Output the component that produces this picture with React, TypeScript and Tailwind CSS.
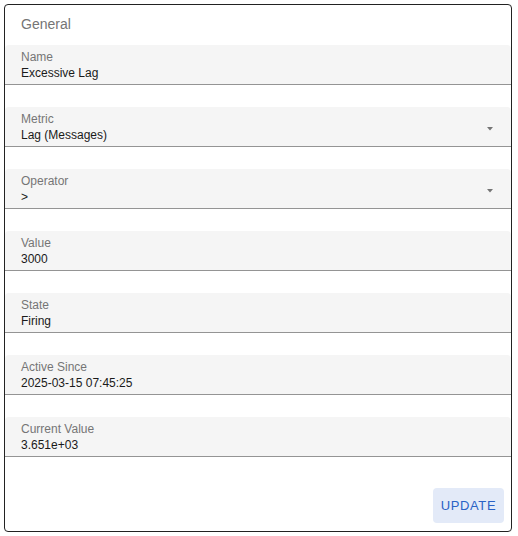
import React from "react";

interface Field {
  label: string;
  value: string;
  select?: boolean;
}

const fields: Field[] = [
  { label: "Name", value: "Excessive Lag" },
  { label: "Metric", value: "Lag (Messages)", select: true },
  { label: "Operator", value: ">", select: true },
  { label: "Value", value: "3000" },
  { label: "State", value: "Firing" },
  { label: "Active Since", value: "2025-03-15 07:45:25" },
  { label: "Current Value", value: "3.651e+03" },
];

function FilledField({ label, value, select }: Field) {
  return (
    <div className="relative h-10 bg-[#f5f5f5] rounded-t border-b border-[#949494] px-4 pt-1 mb-[22px]">
      <div className="text-[12px] leading-4 text-[#757575]">{label}</div>
      <div className="text-[12px] leading-4 text-[#1a1a1a]">{value}</div>
      {select ? (
        <svg
          className="absolute right-[17px] top-[20px]"
          width="8"
          height="4"
          viewBox="0 0 8 4"
        >
          <path d="M1 0h6L4 3.5z" fill="#757575" />
        </svg>
      ) : null}
    </div>
  );
}

export default function App() {
  return (
    <div
      className="p-1 bg-white"
      style={{ fontFamily: '"Liberation Sans", Arial, sans-serif' }}
    >
      <div className="w-[508px] h-[528px] border border-[#222] rounded flex flex-col">
        <div className="h-10 px-4 pb-[2px] flex items-center text-[14px] text-[#757575]">
          General
        </div>
        {fields.map((f) => (
          <FilledField key={f.label} {...f} />
        ))}
        <div className="flex-1 flex items-end justify-end pr-[7px] pb-2">
          <button className="w-[71px] h-[35px] rounded bg-[#e3eaf8] text-[#2a62c6] text-[13px] font-normal tracking-[0.6px]">
            UPDATE
          </button>
        </div>
      </div>
    </div>
  );
}
